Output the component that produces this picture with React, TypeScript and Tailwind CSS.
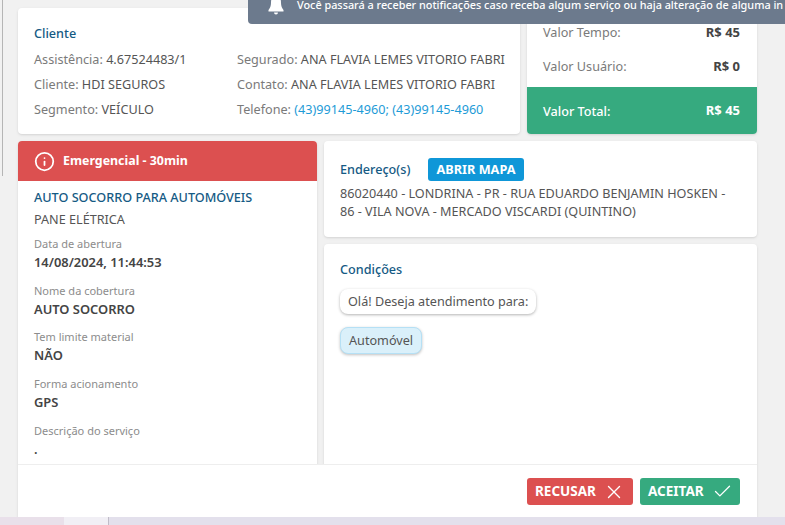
import { Check, Info, X } from "lucide-react";

function Line({ k, v }: { k: string; v: React.ReactNode }) {
  return (
    <div className="text-[#7a7a7a] whitespace-nowrap">
      {k} <span className="text-[#555]">{v}</span>
    </div>
  );
}

function Field({ k, v }: { k: string; v: string }) {
  return (
    <div className="h-[46.7px]">
      <div className="text-[11px] leading-[17px] text-[#8c8c8c]">{k}</div>
      <div className="text-[12.9px] leading-[20px] font-semibold text-[#444]">{v}</div>
    </div>
  );
}

export default function App() {
  return (
    <div
      className="relative w-[785px] h-[525px] overflow-hidden bg-[#f1f1f1] text-[12.65px]"
      style={{ fontFamily: '"Noto Sans", sans-serif' }}
    >
      <div className="absolute left-[2px] top-0 w-px h-[176px] bg-[#b5b5b5]" />
      <div className="absolute left-[248px] top-0 w-[537px] h-6 bg-[#6c7a8d] rounded-bl-[4px] z-10 overflow-hidden whitespace-nowrap text-white text-[10.85px] font-medium">
        <svg viewBox="0 0 16 20" className="absolute left-[20px] top-[-5px] w-4 h-5" fill="white">
          <path d="M8 0C4 0 3 4 3 8C3 11 2 13 .5 15V16.5H15.5V15C14 13 13 11 13 8C13 4 12 0 8 0Z" />
          <path d="M6 17.5a2 2 0 0 0 4 0Z" />
        </svg>
        <span className="absolute left-[49px] top-[-3px] leading-[16px]">Você passará a receber notificações caso receba algum serviço ou haja alteração de alguma in</span>
      </div>

      <div className="ml-[18px] w-[739px] h-[517px] flex flex-col pt-2">
        <div className="flex gap-[7px] h-[126px]">
          <div className="w-[502px] bg-white rounded shadow-sm pl-4 pt-[15px]">
            <div className="text-[#155a84] font-medium leading-[20px]">Cliente</div>
            <div className="flex mt-[4px] leading-[25px]">
              <div className="w-[203px] shrink-0">
                <Line k="Assistência:" v="4.67524483/1" />
                <Line k="Cliente:" v="HDI SEGUROS" />
                <Line k="Segmento:" v="VEÍCULO" />
              </div>
              <div>
                <Line k="Segurado:" v="ANA FLAVIA LEMES VITORIO FABRI" />
                <Line k="Contato:" v="ANA FLAVIA LEMES VITORIO FABRI" />
                <Line k="Telefone:" v={<span className="text-[#1e9bd7]">(43)99145-4960; (43)99145-4960</span>} />
              </div>
            </div>
          </div>
          <div className="flex-1 bg-white rounded shadow-sm flex flex-col overflow-hidden">
            <div className="flex-1 pl-4 pr-[17px] pt-[14px]">
              <div className="flex justify-between h-[34px] leading-[20px]">
                <span className="text-[#7a7a7a]">Valor Tempo:</span>
                <span className="font-bold text-[#444] text-[13px]">R$ 45</span>
              </div>
              <div className="flex justify-between leading-[20px]">
                <span className="text-[#7a7a7a]">Valor Usuário:</span>
                <span className="font-bold text-[#444] text-[13px]">R$ 0</span>
              </div>
            </div>
            <div className="h-[47px] bg-[#36aa7f] pl-4 pr-[17px] pt-px flex items-center justify-between text-white">
              <span className="font-medium">Valor Total:</span>
              <span className="font-bold text-[13px]">R$ 45</span>
            </div>
          </div>
        </div>

        <div className="flex gap-[7px] mt-[7px] flex-1 min-h-0">
          <div className="w-[299px] bg-white rounded-t overflow-hidden shadow-sm">
            <div className="h-10 bg-[#dc5050] text-white font-bold text-[12.4px] flex items-center pl-[16px] gap-[8px]">
              <Info size={21} />
              <span>Emergencial - 30min</span>
            </div>
            <div className="pl-4 pt-[6px]">
              <div className="text-[#155a84] font-medium leading-[20px]">AUTO SOCORRO PARA AUTOMÓVEIS</div>
              <div className="text-[#555] leading-[20px] mt-[2px]">PANE ELÉTRICA</div>
              <div className="mt-[6px]">
                <Field k="Data de abertura" v="14/08/2024, 11:44:53" />
                <Field k="Nome da cobertura" v="AUTO SOCORRO" />
                <Field k="Tem limite material" v="NÃO" />
                <Field k="Forma acionamento" v="GPS" />
                <Field k="Descrição do serviço" v="." />
              </div>
            </div>
          </div>
          <div className="flex-1 flex flex-col gap-[7px] min-w-0">
            <div className="h-24 bg-white rounded shadow-sm pl-4 pt-[17px]">
              <div className="flex items-center h-[23px]">
                <span className="w-[88px] text-[#155a84] font-medium">Endereço(s)</span>
                <span className="h-[23px] w-[96px] justify-center flex items-center rounded-[3px] bg-[#0f97d8] text-white font-bold text-[12.7px]">ABRIR MAPA</span>
              </div>
              <div className="text-[#555] leading-[18px] mt-[3px] w-[400px]">
                86020440 - LONDRINA - PR - RUA EDUARDO BENJAMIN HOSKEN - 86 - VILA NOVA - MERCADO VISCARDI (QUINTINO)
              </div>
            </div>
            <div className="flex-1 bg-white rounded-t shadow-sm pl-4 pt-[15px]">
              <div className="text-[#155a84] font-medium leading-[20px]">Condições</div>
              <div className="mt-[10px] w-fit h-[25px] px-2 flex items-center rounded-lg bg-white text-[#555] shadow-[0_1px_3px_rgba(0,0,0,0.3)]">Olá! Deseja atendimento para:</div>
              <div className="mt-[13px] w-fit h-[27px] px-2 flex items-center rounded-lg bg-[#daf0fa] border border-[#b5e0f5] text-[#555] shadow-[0_1px_3px_rgba(0,0,0,0.25)]">Automóvel</div>
            </div>
          </div>
        </div>

        <div className="absolute left-[18px] top-[464px] w-[739px] h-[54px] bg-white border-t border-[#eeeeee] rounded-b flex items-center justify-end gap-[7px] pr-[17px]">
          <span className="h-[27px] w-[106px] rounded-[3px] bg-[#dc5050] text-white font-bold text-[13.5px] flex items-center pl-2 gap-[7px]">RECUSAR <X size={22} strokeWidth={1.5} /></span>
          <span className="h-[27px] w-[100px] rounded-[3px] bg-[#36aa7f] text-white font-bold text-[13.5px] flex items-center pl-2 gap-[8px]">ACEITAR <Check size={21} strokeWidth={1.5} /></span>
        </div>
      </div>

      <div className="absolute left-0 bottom-0 w-full h-2 bg-[#e3e0ec] flex">
        <div className="w-[64px] bg-[#e9e0ea]" />
        <div className="w-[44px] bg-[#f1eff5]" />
        <div className="w-px bg-[#c0bcc8]" />
      </div>
    </div>
  );
}
